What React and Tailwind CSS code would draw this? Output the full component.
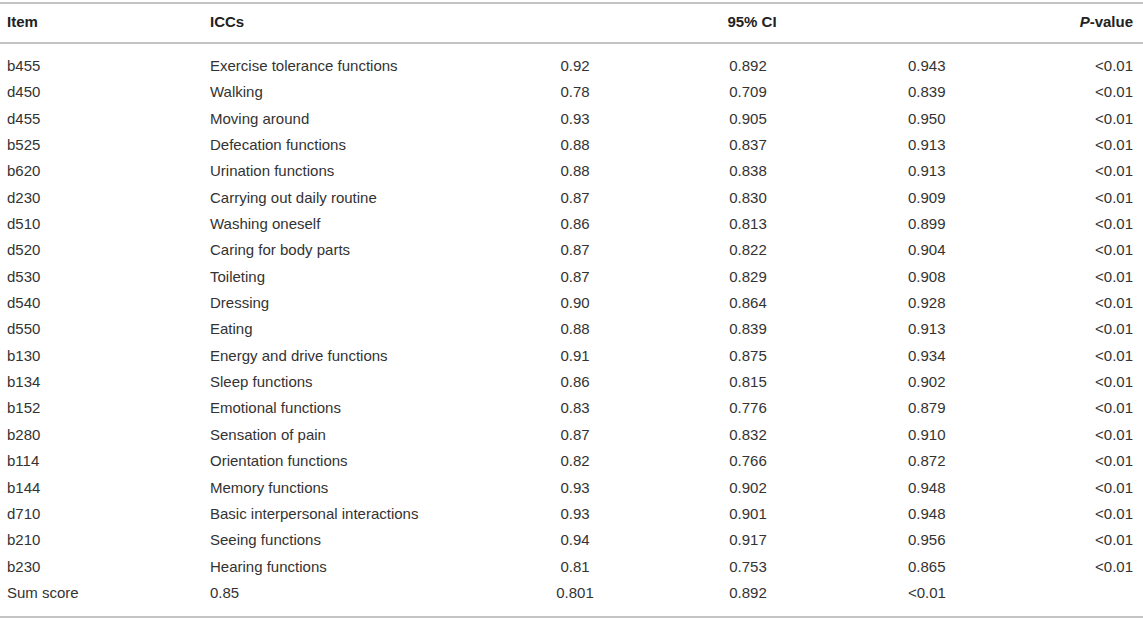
import React from "react";

const rows = [
  ["b455", "Exercise tolerance functions", "0.92", "0.892", "0.943", "<0.01"],
  ["d450", "Walking", "0.78", "0.709", "0.839", "<0.01"],
  ["d455", "Moving around", "0.93", "0.905", "0.950", "<0.01"],
  ["b525", "Defecation functions", "0.88", "0.837", "0.913", "<0.01"],
  ["b620", "Urination functions", "0.88", "0.838", "0.913", "<0.01"],
  ["d230", "Carrying out daily routine", "0.87", "0.830", "0.909", "<0.01"],
  ["d510", "Washing oneself", "0.86", "0.813", "0.899", "<0.01"],
  ["d520", "Caring for body parts", "0.87", "0.822", "0.904", "<0.01"],
  ["d530", "Toileting", "0.87", "0.829", "0.908", "<0.01"],
  ["d540", "Dressing", "0.90", "0.864", "0.928", "<0.01"],
  ["d550", "Eating", "0.88", "0.839", "0.913", "<0.01"],
  ["b130", "Energy and drive functions", "0.91", "0.875", "0.934", "<0.01"],
  ["b134", "Sleep functions", "0.86", "0.815", "0.902", "<0.01"],
  ["b152", "Emotional functions", "0.83", "0.776", "0.879", "<0.01"],
  ["b280", "Sensation of pain", "0.87", "0.832", "0.910", "<0.01"],
  ["b114", "Orientation functions", "0.82", "0.766", "0.872", "<0.01"],
  ["b144", "Memory functions", "0.93", "0.902", "0.948", "<0.01"],
  ["d710", "Basic interpersonal interactions", "0.93", "0.901", "0.948", "<0.01"],
  ["b210", "Seeing functions", "0.94", "0.917", "0.956", "<0.01"],
  ["b230", "Hearing functions", "0.81", "0.753", "0.865", "<0.01"],
  ["Sum score", "0.85", "0.801", "0.892", "<0.01", ""],
];

const grid = "grid grid-cols-[203px_290px_150px_196px_150px_137px]";

const App = () => {
  return (
    <div
      className="w-[1143px] h-[619px] bg-white text-[15px] text-[#333] pl-[7px] pr-[10px]"
      style={{ fontFamily: '"Liberation Sans", Arial, sans-serif' }}
    >
      <div className="h-[2px]" />
      <div className="border-t-2 border-b-2 border-[#c4c4c4] -ml-[7px] -mr-[10px] pl-[7px] pr-[10px]">
        <div className={`${grid} pt-[9px] pb-[12px] leading-[17px] font-bold text-[#222]`}>
          <div>Item</div>
          <div>ICCs</div>
          <div />
          <div className="text-center pl-[8px]">95% CI</div>
          <div />
          <div className="text-right">
            <i>P</i>-value
          </div>
        </div>
      </div>

      <div className="pt-[9px] pb-[10px]">
        {rows.map((r, i) => (
          <div key={i} className={`${grid} leading-[26.35px]`}>
            <div>{r[0]}</div>
            <div>{r[1]}</div>
            <div className="text-center">{r[2]}</div>
            <div className="text-center">{r[3]}</div>
            <div className="pl-[62px]">{r[4]}</div>
            <div className="text-right">{r[5]}</div>
          </div>
        ))}
      </div>

      <div className="border-t-2 border-[#c4c4c4] -ml-[7px] -mr-[10px]" />
    </div>
  );
};

export default App;
